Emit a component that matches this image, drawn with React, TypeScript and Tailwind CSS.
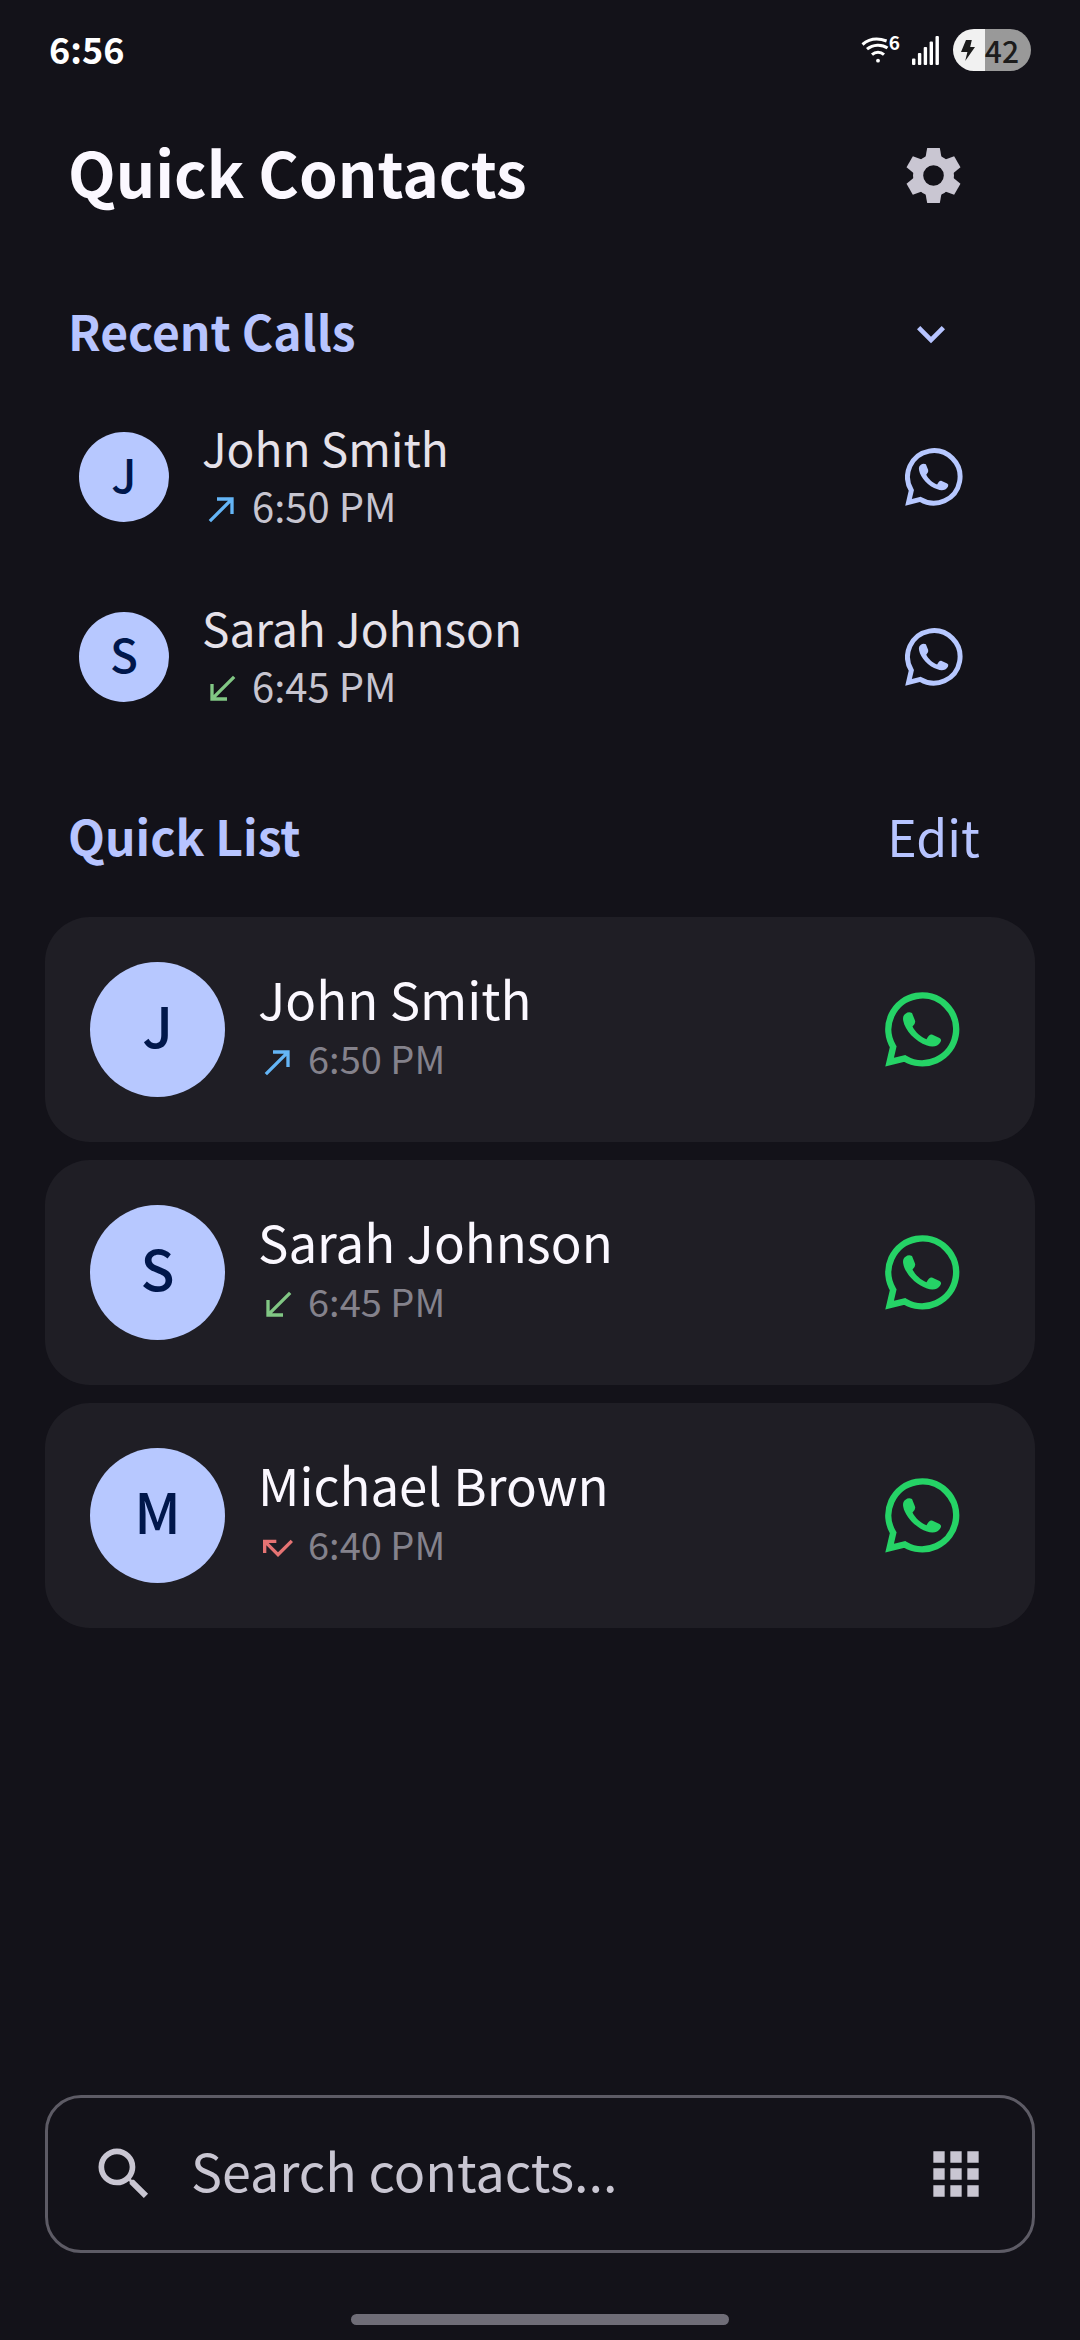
import type { ReactNode } from 'react';
import { MdApps, MdCallMade, MdCallMissed, MdCallReceived, MdExpandMore, MdSearch } from 'react-icons/md';

type Direction = 'outgoing' | 'incoming' | 'missed';

interface Contact {
  name: string;
  time: string;
  direction: Direction;
}

const contacts: Contact[] = [
  { name: 'John Smith', time: '6:50 PM', direction: 'outgoing' },
  { name: 'Sarah Johnson', time: '6:45 PM', direction: 'incoming' },
  { name: 'Michael Brown', time: '6:40 PM', direction: 'missed' },
];

function WifiIcon() {
  return (
    <svg viewBox="0 0 28 29" className="h-[29px] w-[28px]" fill="none" stroke="currentColor" strokeWidth="3" aria-hidden="true">
      <path d="M1.5 8.5C8 2.8 17 1.8 25.6 5" />
      <path d="M6 13.2C12 8 21 8 26.5 12" />
      <path d="M11 18.6C14.5 15.4 19.5 15.4 23 18.6" />
      <circle cx="17" cy="24.7" r="1.9" fill="currentColor" stroke="none" />
    </svg>
  );
}

function SignalIcon() {
  return (
    <svg viewBox="0 0 27 29" className="h-[29px] w-[27px]" fill="currentColor" aria-hidden="true">
      <rect x="0" y="22.5" width="3.4" height="6.5" rx="1" />
      <rect x="5.9" y="17" width="3.4" height="12" rx="1" />
      <rect x="11.7" y="11" width="3.4" height="18" rx="1" />
      <rect x="17.6" y="5.5" width="3.4" height="23.5" rx="1" />
      <rect x="23.5" y="0" width="3.4" height="29" rx="1" />
    </svg>
  );
}

function BoltIcon() {
  return (
    <svg viewBox="0 0 14 21" className="h-[21px] w-[14px]" fill="currentColor" aria-hidden="true">
      <path d="M5 0h5.8L9.2 7H14L4.2 21l2.2-9H0z" />
    </svg>
  );
}

function GearIcon() {
  return (
    <svg viewBox="-10 -10 20 20" className="size-[55px]" aria-hidden="true">
      <circle r="5.6" fill="none" stroke="currentColor" strokeWidth="3.7" />
      {[0, 60, 120, 180, 240, 300].map((angle) => (
        <path key={angle} d="M-2.3 -10H2.3L2.9 -6.6L2.4 -5H-2.4L-2.9 -6.6Z" fill="currentColor" transform={`rotate(${angle})`} />
      ))}
    </svg>
  );
}

function WhatsAppIcon({ className }: { className: string }) {
  return (
    <svg viewBox="0 0 75 75" className={className} aria-hidden="true">
      <path
        d="M8.2 54.8A33.9 33.9 0 1 1 19.8 66.4L4.6 70.2Z"
        fill="none"
        stroke="currentColor"
        strokeWidth="6.4"
        strokeMiterlimit="8"
      />
      <path
        d="M20.5 21.8Q23.5 19.3 27 21L30 28.5Q31 31.5 27.5 34.5C30 39.5 35.5 45 41.5 47.2C43.5 44 45 41.8 47.5 42.7L54.5 46Q57 47.5 55.5 50C53 55 47 55.5 42 53.5C30 49.5 20 38 18.3 29C17.5 25.5 18.5 23 20.5 21.8Z"
        fill="currentColor"
      />
    </svg>
  );
}

function CallIcon({ direction }: { direction: Direction }) {
  if (direction === 'outgoing') return <MdCallMade className="mt-2 size-10 text-[#64b5f6]" aria-label="Outgoing" />;
  if (direction === 'incoming') return <MdCallReceived className="mt-2 size-10 text-[#81c784]" aria-label="Incoming" />;
  return <MdCallMissed className="mt-2 size-10 text-[#e57373]" aria-label="Missed" />;
}

function StatusBar() {
  return (
    <div className="flex h-[100px] items-center justify-between pr-[49px] pl-[49px] text-white">
      <span className="pb-1 text-[36px] leading-[48px] font-bold">6:56</span>
      <div className="flex items-center">
        <WifiIcon />
        <span className="mr-3 mb-4 text-[19px] leading-5 font-bold">6</span>
        <SignalIcon />
        <div className="ml-[14px] flex h-[42px] w-[78px] items-center justify-between rounded-full bg-linear-to-r from-[#f1f1f1] from-41% to-[#999999] to-41% pr-3 pl-2 text-[#1c1c1c]">
          <BoltIcon />
          <span className="text-[30px] leading-[42px] font-medium">42</span>
        </div>
      </div>
    </div>
  );
}

function SectionTitle({ children }: { children: ReactNode }) {
  return <h2 className="pb-2 text-[48px] leading-[64px] font-semibold text-[#b7c4ff]">{children}</h2>;
}

function RecentRow({ contact }: { contact: Contact }) {
  return (
    <li className="flex h-[180px] items-center px-[79px]">
      <div className="flex size-[90px] shrink-0 items-center justify-center rounded-full bg-[#b7c8ff] pb-2 text-[46px] leading-[60px] font-medium text-[#00174b]">
        {contact.name[0]}
      </div>
      <div className="ml-[33px] min-w-0 flex-1 pb-1">
        <p className="text-[46px] leading-[60px] text-[#e5e1e9]">{contact.name}</p>
        <p className="flex h-[56px] items-center gap-[10px] text-[40px] leading-[56px] text-[#c7c5d0]">
          <CallIcon direction={contact.direction} />
          {contact.time}
        </p>
      </div>
      <button type="button" aria-label={`WhatsApp ${contact.name}`} className="flex size-[135px] items-center justify-center text-[#b7c8ff]">
        <WhatsAppIcon className="size-[58px]" />
      </button>
    </li>
  );
}

function QuickCard({ contact }: { contact: Contact }) {
  return (
    <li className="flex items-center rounded-[45px] bg-[#1f1e25] p-[45px]">
      <div className="flex size-[135px] shrink-0 items-center justify-center rounded-full bg-[#b7c8ff] pb-3 text-[56px] leading-[72px] font-medium text-[#00174b]">
        {contact.name[0]}
      </div>
      <div className="ml-[33px] min-w-0 flex-1 pb-2">
        <p className="text-[51px] leading-[64px] text-[#fbf8ff]">{contact.name}</p>
        <p className="flex h-[56px] items-center gap-[10px] text-[38px] leading-[56px] text-[#84828c]">
          <CallIcon direction={contact.direction} />
          {contact.time}
        </p>
      </div>
      <button type="button" aria-label={`WhatsApp ${contact.name}`} className="flex size-[135px] items-center justify-center text-[#25d366]">
        <WhatsAppIcon className="size-[75px]" />
      </button>
    </li>
  );
}

export default function App() {
  return (
    <div className="flex min-h-screen flex-col bg-[#131219] font-['Noto_Sans_CJK_SC','Noto_Sans',sans-serif]">
      <StatusBar />
      <header className="flex h-[150px] items-center justify-between pr-[79px] pl-[68px]">
        <h1 className="pb-2 text-[62px] leading-[80px] font-semibold text-[#fbf8ff]">Quick Contacts</h1>
        <button type="button" aria-label="Settings" className="flex size-[135px] items-center justify-center text-[#c9c6d2]">
          <GearIcon />
        </button>
      </header>

      <main className="flex flex-1 flex-col">
        <section>
          <div className="mt-[31px] flex h-[106px] items-center justify-between pr-[79px] pl-[68px]">
            <SectionTitle>Recent Calls</SectionTitle>
            <button type="button" aria-label="Collapse recent calls" className="flex h-[106px] w-[141px] items-center justify-center text-[#b7c4ff]">
              <MdExpandMore className="size-14" />
            </button>
          </div>
          <ul>
            {contacts.slice(0, 2).map((contact) => (
              <RecentRow key={contact.name} contact={contact} />
            ))}
          </ul>
        </section>

        <section>
          <div className="mt-[14px] flex h-[156px] items-center justify-between pr-[79px] pl-[68px]">
            <SectionTitle>Quick List</SectionTitle>
            <button type="button" className="w-[135px] pb-2 text-center text-[50px] leading-[64px] text-[#b7c4ff]">
              Edit
            </button>
          </div>
          <ul className="flex flex-col gap-[18px] px-[45px]">
            {contacts.map((contact) => (
              <QuickCard key={contact.name} contact={contact} />
            ))}
          </ul>
        </section>

        <form role="search" className="mx-[45px] mt-auto flex h-[158px] items-center rounded-[36px] border-3 border-[#5d5b65] px-[42px] text-[#c9c6d2]">
          <label htmlFor="contact-search" aria-label="Search contacts">
            <MdSearch className="size-[68px]" />
          </label>
          <input
            id="contact-search"
            type="search"
            placeholder="Search contacts..."
            className="ml-[33px] min-w-0 flex-1 bg-transparent pb-2 text-[52px] leading-[72px] outline-none placeholder:text-[#c9c6d2]"
          />
          <button type="button" aria-label="Dial pad">
            <MdApps className="size-[68px]" />
          </button>
        </form>
      </main>

      <footer className="flex h-[87px] items-end justify-center pb-[15px]">
        <div className="h-[11px] w-[35%] rounded-full bg-[#6f6d77]" />
      </footer>
    </div>
  );
}
